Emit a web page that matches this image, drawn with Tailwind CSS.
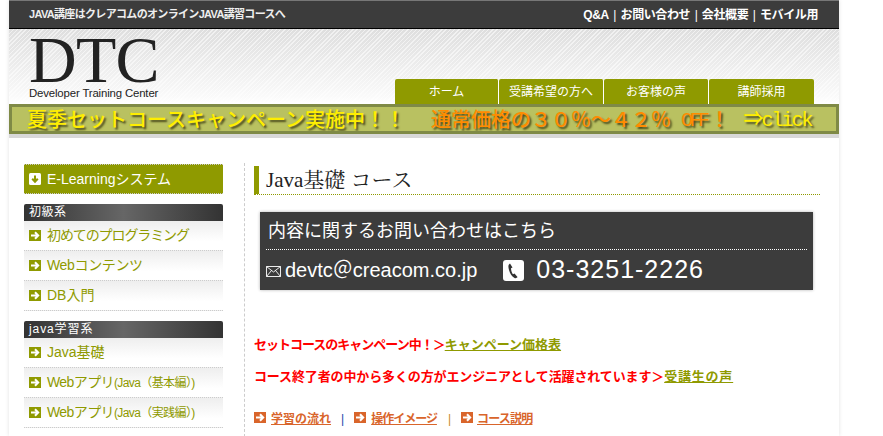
<html lang="ja">
<head>
  <meta charset="UTF-8">
  <title>Java基礎 コース – DTC</title>
  <script src="https://cdn.jsdelivr.net/npm/@tailwindcss/browser@4"></script>
</head>
<body class="bg-white h-[436px] overflow-hidden font-['Liberation_Sans','Noto_Sans_CJK_JP',sans-serif] text-[#333]">
  <div class="w-[830px] ml-[9px] h-[436px] overflow-hidden bg-white shadow-[0_0_4px_rgba(0,0,0,0.12)] border-t border-[#777]">
    <!-- top bar -->
    <div class="h-[28px] bg-[#3c3c3c] border-b border-black flex items-center justify-between pl-[20px] pr-[21px] text-[11px] font-bold text-[#eee]">
      <p class="tracking-[-0.67px]">JAVA講座はクレアコムのオンラインJAVA講習コースへ</p>
      <p class="text-white text-[12px] tracking-[-0.4px] flex gap-[4.5px]">
        <span>Q&amp;A</span><span class="font-normal">|</span><span>お問い合わせ</span><span class="font-normal">|</span><span>会社概要</span><span class="font-normal">|</span><span>モバイル用</span>
      </p>
    </div>

    <!-- header -->
    <div class="h-[75px] flex items-end justify-between pr-[25px] bg-[repeating-linear-gradient(135deg,rgba(255,255,255,0.55)_0,rgba(255,255,255,0.55)_1px,transparent_1px,transparent_3px),linear-gradient(#dedede,#fafafa_90%,#fff)]">
      <div class="pl-[20px] self-start text-[#222]">
        <div class="font-['Liberation_Serif',serif] text-[66px] leading-[52px] h-[51px] mt-[5px] tracking-[-0.7px]">DTC</div>
        <div class="text-[11.4px] leading-[14px] mt-[1px] tracking-[-0.15px]">Developer Training Center</div>
      </div>
      <nav class="flex text-[12px] text-white">
        <a class="w-[104px] h-[25px] bg-[#8f9a00] rounded-t-[2px] flex items-center justify-center border-r border-white">ホーム</a>
        <a class="w-[105px] h-[25px] bg-[#8f9a00] rounded-t-[2px] flex items-center justify-center border-r border-white">受講希望の方へ</a>
        <a class="w-[105px] h-[25px] bg-[#8f9a00] rounded-t-[2px] flex items-center justify-center border-r border-white">お客様の声</a>
        <a class="w-[105px] h-[25px] bg-[#8f9a00] rounded-t-[2px] flex items-center justify-center">講師採用</a>
      </nav>
    </div>

    <!-- campaign banner -->
    <a class="flex h-[30px] bg-[#b9c161] border-[3px] border-[#7f8a46] pl-[15px] whitespace-nowrap overflow-hidden text-[20px] leading-[27px] font-medium [text-shadow:2px_2px_2px_#4a4a1a]">
      <span class="text-[#ffee00]">夏季セットコースキャンペーン実施中！！</span>
      <span class="text-[#ff8c00] ml-[26px] flex">通常価格の３０％～４２％<span class="ml-[10px] font-['Liberation_Mono',monospace] tracking-[-3.5px]">OFF</span><span class="ml-[3px]">！</span></span>
      <span class="text-[#ffee00] ml-[14px] font-['Liberation_Mono','Noto_Sans_CJK_JP',monospace] tracking-[-2px]">⇒click</span>
    </a>
    <div class="h-[4px] bg-[#d8d8d8]"></div>

    <div class="flex pt-[26px]">
      <!-- sidebar -->
      <aside class="w-[199px] ml-[15px] shrink-0">
        <a class="h-[30px] bg-[#8f9a00] border-y border-dotted border-[#ccc] flex items-center gap-[6px] pl-[5px] text-white text-[14px]">
          <svg class="w-[12px] h-[12px]" viewBox="0 0 12 12"><rect width="12" height="12" rx="1.5" fill="#fff"/><path d="M6 2.5v6M3.2 5.8L6 8.8l2.8-3" fill="none" stroke="#8f9a00" stroke-width="2"/></svg>
          E-Learningシステム
        </a>

        <h3 class="mt-[10px] h-[17px] rounded-t-[2px] bg-[linear-gradient(90deg,#333,#666_50%,#333)] pl-[5px] text-white text-[12px] leading-[17px] tracking-[0.5px]">初級系</h3>
        <ul class="text-[#8f9a00] text-[14px]">
          <li class="h-[30px] flex items-center gap-[6px] pl-[5px] border-b border-dotted border-[#ccc] bg-[linear-gradient(#eee,#fff_70%)]"><svg class="w-[12px] h-[11px]" viewBox="0 0 12 11"><rect width="12" height="11" fill="#8f9a00"/><path d="M2 5.5h7M6 2.2l3.2 3.3L6 8.8" fill="none" stroke="#fff" stroke-width="2"/></svg><span class="tracking-[-1.1px]">初めてのプログラミング</span></li>
          <li class="h-[30px] flex items-center gap-[6px] pl-[5px] border-b border-dotted border-[#ccc] bg-[linear-gradient(#eee,#fff_70%)]"><svg class="w-[12px] h-[11px]" viewBox="0 0 12 11"><rect width="12" height="11" fill="#8f9a00"/><path d="M2 5.5h7M6 2.2l3.2 3.3L6 8.8" fill="none" stroke="#fff" stroke-width="2"/></svg><span class="tracking-[-0.35px]">Webコンテンツ</span></li>
          <li class="h-[30px] flex items-center gap-[6px] pl-[5px] border-b border-dotted border-[#ccc] bg-[linear-gradient(#eee,#fff_70%)]"><svg class="w-[12px] h-[11px]" viewBox="0 0 12 11"><rect width="12" height="11" fill="#8f9a00"/><path d="M2 5.5h7M6 2.2l3.2 3.3L6 8.8" fill="none" stroke="#fff" stroke-width="2"/></svg>DB入門</li>
        </ul>

        <h3 class="mt-[10px] h-[17px] rounded-t-[2px] bg-[linear-gradient(90deg,#333,#666_50%,#333)] pl-[5px] text-white text-[12px] leading-[17px] tracking-[0.9px]">java学習系</h3>
        <ul class="text-[#8f9a00] text-[14px]">
          <li class="h-[30px] flex items-center gap-[6px] pl-[5px] border-b border-dotted border-[#ccc] bg-[linear-gradient(#eee,#fff_70%)]"><svg class="w-[12px] h-[11px]" viewBox="0 0 12 11"><rect width="12" height="11" fill="#8f9a00"/><path d="M2 5.5h7M6 2.2l3.2 3.3L6 8.8" fill="none" stroke="#fff" stroke-width="2"/></svg>Java基礎</li>
          <li class="h-[30px] flex items-center gap-[6px] pl-[5px] border-b border-dotted border-[#ccc] bg-[linear-gradient(#eee,#fff_70%)]"><svg class="w-[12px] h-[11px]" viewBox="0 0 12 11"><rect width="12" height="11" fill="#8f9a00"/><path d="M2 5.5h7M6 2.2l3.2 3.3L6 8.8" fill="none" stroke="#fff" stroke-width="2"/></svg><span class="tracking-[-0.6px]">Webアプリ<span class="text-[12px]">(Java（基本編）)</span></span></li>
          <li class="h-[30px] flex items-center gap-[6px] pl-[5px] border-b border-dotted border-[#ccc] bg-[linear-gradient(#eee,#fff_70%)]"><svg class="w-[12px] h-[11px]" viewBox="0 0 12 11"><rect width="12" height="11" fill="#8f9a00"/><path d="M2 5.5h7M6 2.2l3.2 3.3L6 8.8" fill="none" stroke="#fff" stroke-width="2"/></svg><span class="tracking-[-0.6px]">Webアプリ<span class="text-[12px]">(Java（実践編）)</span></span></li>
        </ul>
      </aside>

      <!-- main -->
      <main class="ml-[21px] w-[576px] h-[274px] -mt-[1px] border-l border-dashed border-[#ccc] pl-[9px] pt-[3px]">
        <h1 class="h-[29px] border-b border-dotted border-[#8f9a00] text-[21px] leading-[28px] text-[#222] font-['Liberation_Serif','Noto_Serif_CJK_JP','Noto_Sans_CJK_JP',serif] flex">
          <span class="w-[5px] h-[28px] bg-[#8f9a00] mr-[7px]"></span>Java基礎 コース
        </h1>

        <div class="ml-[6px] mt-[17px] w-[553px] h-[78px] bg-[#3c3c3c] shadow-[0_0_3px_rgba(0,0,0,0.3)] px-[6px] text-white">
          <p class="h-[38px] border-b border-dotted border-white text-[18px] leading-[38px] pl-[2px]">内容に関するお問い合わせはこちら</p>
          <div class="flex items-center h-[40px]">
            <svg class="w-[15px] h-[11px] mt-[2px]" viewBox="0 0 15 11"><path d="M.5.5h14v10H.5zM.5.5l7 5.5 7-5.5M.5 10.5l5-6M14.5 10.500l-5-6" fill="none" stroke="#fff" stroke-width="0.9"/></svg>
            <span class="ml-[4px] text-[20px]">devtc＠creacom.co.jp</span>
            <svg class="ml-[26px] w-[21px] h-[21px]" viewBox="0 0 21 21"><rect width="21" height="21" rx="3" fill="#fff"/><path d="M7 3.500c-1.800 1-2 3-1 6.500s2.600 6.500 5.500 8c1.200.5 2.600 0 3-1l-3-3.500-1.500.7c-1-1-2-4-2-6l1.500-.7z" fill="#333"/></svg>
            <span class="ml-[12px] text-[25px] tracking-[1px]">03-3251-2226</span>
          </div>
        </div>

        <p class="mt-[46px] text-[13px] font-bold text-[#f00] leading-[18px]"><span class="tracking-[-1px]">セットコースのキャンペーン中！＞</span><a class="text-[#8f9a00] underline">キャンペーン価格表</a></p>
        <p class="mt-[14px] text-[13px] font-bold text-[#f00] leading-[18px]"><span class="tracking-[-0.13px]">コース終了者の中から多くの方がエンジニアとして活躍されています＞</span><a class="text-[#8f9a00] underline tracking-[0.8px]">受講生の声</a></p>

        <div class="mt-[24px] flex items-center text-[12px] font-bold text-[#d9652b] leading-[18px]">
          <svg class="w-[12px] h-[11px] -mt-[3px]" viewBox="0 0 12 11"><rect width="12" height="11" fill="#d9652b"/><path d="M2 5.500h7M6 2.200l3.200 3.300L6 8.800" fill="none" stroke="#fff" stroke-width="2"/></svg>
          <a class="underline ml-[5px]">学習の流れ</a>
          <span class="ml-[10px] font-normal text-[#2244aa]">|</span>
          <svg class="ml-[10px] w-[12px] h-[11px] -mt-[3px]" viewBox="0 0 12 11"><rect width="12" height="11" fill="#d9652b"/><path d="M2 5.500h7M6 2.200l3.200 3.300L6 8.800" fill="none" stroke="#fff" stroke-width="2"/></svg>
          <a class="underline ml-[5px] tracking-[-1px]">操作イメージ</a>
          <span class="ml-[11px] font-normal text-[#c98b2b]">|</span>
          <svg class="ml-[10px] w-[12px] h-[11px] -mt-[3px]" viewBox="0 0 12 11"><rect width="12" height="11" fill="#d9652b"/><path d="M2 5.500h7M6 2.200l3.200 3.300L6 8.800" fill="none" stroke="#fff" stroke-width="2"/></svg>
          <a class="underline ml-[4px] tracking-[-0.8px]">コース説明</a>
        </div>
      </main>
    </div>
  </div>
</body>
</html>
